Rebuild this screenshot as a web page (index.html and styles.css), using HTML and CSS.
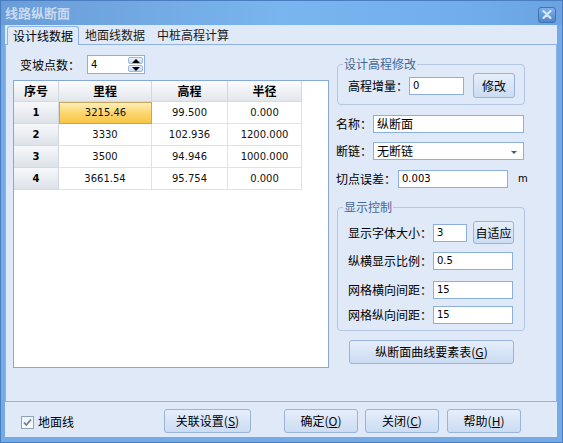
FILE: index.html
```html
<!DOCTYPE html>
<html>
<head>
<meta charset="utf-8">
<title>线路纵断面</title>
<link rel="stylesheet" href="styles.css">
</head>
<body>
<div class="window">
  <div class="titlebar">
    <span class="title">线路纵断面</span>
    <span class="close">
      <svg width="10" height="9" viewBox="0 0 10 9"><path d="M1.5 1 L8.5 8 M8.5 1 L1.5 8" stroke="#d6e5f7" stroke-width="2.2" stroke-linecap="round"/></svg>
    </span>
  </div>
  <div class="client">
    <div class="tabs">
      <div class="tab active">设计线数据</div>
      <div class="tab">地面线数据</div>
      <div class="tab">中桩高程计算</div>
    </div>
    <div class="panel">
      <div class="leftcol">
        <div class="spinrow">
          <span class="spinlbl">变坡点数：</span>
          <div class="spin">
            <span class="num">4</span>
            <div class="spinbtns">
              <span class="sbtn"><i class="tri-up"></i></span>
              <span class="sbtn"><i class="tri-down"></i></span>
            </div>
          </div>
        </div>
        <div class="grid">
          <div class="tbl">
            <div class="hd">序号</div>
            <div class="hd">里程</div>
            <div class="hd">高程</div>
            <div class="hd">半径</div>

            <div class="rh">1</div>
            <div class="cell sel">3215.46</div>
            <div class="cell">99.500</div>
            <div class="cell">0.000</div>

            <div class="rh">2</div>
            <div class="cell">3330</div>
            <div class="cell">102.936</div>
            <div class="cell">1200.000</div>

            <div class="rh">3</div>
            <div class="cell">3500</div>
            <div class="cell">94.946</div>
            <div class="cell">1000.000</div>

            <div class="rh">4</div>
            <div class="cell">3661.54</div>
            <div class="cell">95.754</div>
            <div class="cell">0.000</div>
          </div>
        </div>
      </div>
      <div class="rightcol">
        <fieldset class="grp g1">
          <legend>设计高程修改</legend>
          <div class="row r-inc">
            <span class="lbl-inc">高程增量：</span>
            <div class="input w-inc"><span class="num">0</span></div>
            <div class="btn b-mod">修改</div>
          </div>
        </fieldset>

        <div class="row r-name">
          <span class="lbl-2">名称：</span>
          <div class="input w-long">纵断面</div>
        </div>
        <div class="row r-chain">
          <span class="lbl-2">断链：</span>
          <div class="input w-long combo">无断链<i class="tri-combo"></i></div>
        </div>
        <div class="row r-err">
          <span class="lbl-err">切点误差：</span>
          <div class="input w-err"><span class="num">0.003</span></div>
          <span class="num unit">m</span>
        </div>

        <fieldset class="grp g2">
          <legend>显示控制</legend>
          <div class="row d1">
            <span class="lbl-7">显示字体大小：</span>
            <div class="input w-font"><span class="num">3</span></div>
            <div class="btn b-fit">自适应</div>
          </div>
          <div class="row d2">
            <span class="lbl-7">纵横显示比例：</span>
            <div class="input w-80"><span class="num">0.5</span></div>
          </div>
          <div class="row d3">
            <span class="lbl-7">网格横向间距：</span>
            <div class="input w-80"><span class="num">15</span></div>
          </div>
          <div class="row d4">
            <span class="lbl-7">网格纵向间距：</span>
            <div class="input w-80"><span class="num">15</span></div>
          </div>
        </fieldset>

        <div class="btn b-curve">纵断面曲线要素表(<u>G</u>)</div>
      </div>
    </div>
    <div class="footer">
      <div class="chkwrap">
        <span class="chkbox">
          <svg width="11" height="11" viewBox="0 0 11 11"><path d="M2 5.5 L4.3 8 L9 2.5" fill="none" stroke="#6f7f92" stroke-width="1.8"/></svg>
        </span>
        <span class="chklbl">地面线</span>
      </div>
      <div class="btn fb b-link">关联设置(<u>S</u>)</div>
      <div class="btn fb b-ok">确定(<u>O</u>)</div>
      <div class="btn fb b-close">关闭(<u>C</u>)</div>
      <div class="btn fb b-help">帮助(<u>H</u>)</div>
    </div>
  </div>
</div>
</body>
</html>
```

FILE: styles.css
```css
* { box-sizing: border-box; }
html, body { margin: 0; padding: 0; }
body {
  width: 563px;
  height: 443px;
  overflow: hidden;
  font-family: "Noto Sans CJK SC", sans-serif;
  font-size: 12px;
  line-height: 14px;
  color: #000;
  background: #fff;
}

.window {
  width: 563px;
  height: 443px;
  border: 1px solid #4a7dc0;
  background: #74aae5;
  display: flex;
  flex-direction: column;
}

.titlebar {
  height: 24px;
  display: flex;
  align-items: center;
  justify-content: space-between;
  padding: 0 6px 0 4px;
  background: linear-gradient(90deg, #6a9dd7 0%, #79b5ef 50%, #72aeee 80%, #6aa3e0 100%);
}
.title {
  font-weight: bold;
  font-size: 13px;
  color: #c9d9ee;
}
.close {
  width: 18px;
  height: 16px;
  margin-top: 3px;
  border: 1px solid #4272b6;
  border-radius: 3px;
  background: linear-gradient(#7db0ea, #4f85cb);
  display: flex;
  align-items: center;
  justify-content: center;
}

.client {
  margin: 0 5px 0 4px;
  height: 412px;
  background: #dfe9f8;
  display: flex;
  flex-direction: column;
}

/* tabs */
.tabs {
  height: 19px;
  display: flex;
  padding-left: 2px;
  position: relative;
  z-index: 1;
}
.tab {
  height: 18px;
  margin-top: 1px;
  padding: 0 6px;
  line-height: 18px;
  color: #1a1a1a;
}
.tab.active {
  height: 19px;
  padding: 0 5px;
  line-height: 17px;
  border: 1px solid #8db2e3;
  border-bottom: none;
  border-radius: 3px 3px 0 0;
  background: #dfe9f8;
  color: #000;
}

.panel {
  height: 358px;
  border: 1px solid #8db2e3;
  display: flex;
}

/* left column */
.leftcol { width: 323px; }
.spinrow {
  display: flex;
  align-items: center;
  height: 19px;
  margin-top: 10px;
  padding-left: 14px;
}
.spinlbl { width: 67px; }
.spin {
  width: 58px;
  height: 19px;
  border: 1px solid #8cb0df;
  background: #fff;
  display: flex;
  align-items: center;
  justify-content: space-between;
  padding-left: 3px;
  padding-right: 1px;
}
.spinbtns {
  display: flex;
  flex-direction: column;
  gap: 1px;
}
.sbtn {
  width: 15px;
  height: 7px;
  border: 1px solid #9db8dc;
  border-radius: 2px;
  background: linear-gradient(#eaf1fb, #c9dbf1);
  display: flex;
  align-items: center;
  justify-content: center;
}
.tri-up {
  width: 0; height: 0;
  border-left: 4px solid transparent;
  border-right: 4px solid transparent;
  border-bottom: 4px solid #000;
}
.tri-down {
  width: 0; height: 0;
  border-left: 4px solid transparent;
  border-right: 4px solid transparent;
  border-top: 4px solid #000;
}

.grid {
  margin: 6px 0 0 7px;
  width: 316px;
  height: 288px;
  border: 1px solid #86a9d9;
  background: #fff;
}
.tbl {
  display: grid;
  grid-template-columns: 45px 93px 76px 74px;
  grid-template-rows: 21px repeat(4, 22px);
  width: 288px;
}
.tbl > div {
  display: flex;
  align-items: center;
  justify-content: center;
  border-right: 1px solid #d9e4f1;
  border-bottom: 1px solid #d9e4f1;
}
.tbl > .hd {
  background: linear-gradient(#fcfcfd, #e2e6eb);
  font-weight: bold;
  border-right: 1px solid #d0d7e0;
  border-bottom: 1px solid #d3dbe6;
}
.tbl > .rh {
  background: linear-gradient(#f7f8fa, #dde2e9);
  font-family: "DejaVu Sans", sans-serif;
  font-weight: bold;
  font-size: 10px;
  border-right: 1px solid #d0d7e0;
  border-bottom: 1px solid #d3dbe6;
}
.cell {
  font-family: "DejaVu Sans", sans-serif;
  font-size: 10px;
  color: #111;
}
.tbl > .sel {
  background: linear-gradient(#fdefb8, #fbd66e 50%, #f8c646);
  border: 1px solid #c8a55e;
}

.num {
  font-family: "DejaVu Sans", sans-serif;
  font-size: 10px;
}

/* right column */
.rightcol {
  margin-left: 7px;
  width: 212px;
}
.row {
  display: flex;
  align-items: center;
}
fieldset.grp {
  margin: 12px 0 0 1px;
  width: 188px;
  min-width: 0;
  padding: 0 0 6px 5px;
  border: 1px solid #b3c7e3;
  border-radius: 4px;
}
.grp legend {
  padding: 0 1px;
  line-height: 14px;
  color: #466796;
}

.input {
  height: 18px;
  border: 1px solid #8bb0e0;
  background: #fff;
  padding-left: 3px;
  display: flex;
  align-items: center;
}
.btn {
  border: 1px solid #98b4da;
  border-radius: 3px;
  background: linear-gradient(#e6eefa, #cbdcf3);
  display: flex;
  align-items: center;
  justify-content: center;
}
.btn u { text-decoration: underline; }

.r-inc { margin: 2px 0 0 5px; height: 25px; }
.lbl-inc { width: 61px; }
.w-inc { width: 55px; }
.b-mod { width: 42px; height: 25px; margin-left: 9px; }

.r-name { margin-top: 10px; height: 18px; }
.r-chain { margin-top: 9px; height: 18px; }
.r-err { margin-top: 10px; height: 18px; }
.lbl-2 { width: 37px; }
.w-long { width: 151px; }
.combo { position: relative; }
.tri-combo {
  position: absolute;
  right: 6px;
  top: 8px;
  width: 0; height: 0;
  border-left: 3px solid transparent;
  border-right: 3px solid transparent;
  border-top: 3px solid #4b5b72;
}
.lbl-err { width: 62px; }
.w-err { width: 110px; }
.unit { margin-left: 10px; }

.g2 { margin-top: 12px; padding-bottom: 11px; }
.lbl-7 { width: 85px; }
.d1 { margin: 7px 0 0 5px; height: 23px; }
.d2 { margin: 8px 0 0 5px; height: 18px; }
.d3 { margin: 11px 0 0 5px; height: 18px; }
.d4 { margin: 7px 0 0 5px; height: 18px; }
.w-font { width: 34px; }
.b-fit { width: 41px; height: 23px; margin-left: 6px; }
.w-80 { width: 80px; }

.b-curve {
  width: 165px;
  height: 24px;
  margin: 9px 0 0 13px;
}

/* footer */
.footer {
  flex: 1;
  display: flex;
  align-items: flex-start;
}
.chkwrap {
  width: 159px;
  display: flex;
  align-items: center;
  padding-left: 16px;
  margin-top: 13px;
}
.chkbox {
  width: 13px;
  height: 13px;
  border: 1px solid #8fa3bd;
  background: linear-gradient(#eef2f7, #fdfdfe);
  display: flex;
  align-items: center;
  justify-content: center;
}
.chklbl { margin-left: 4px; }
.fb { height: 24px; margin-top: 7px; }
.b-link { width: 87px; }
.b-ok { width: 74px; margin-left: 33px; }
.b-close { width: 74px; margin-left: 7px; }
.b-help { width: 74px; margin-left: 8px; }
```
